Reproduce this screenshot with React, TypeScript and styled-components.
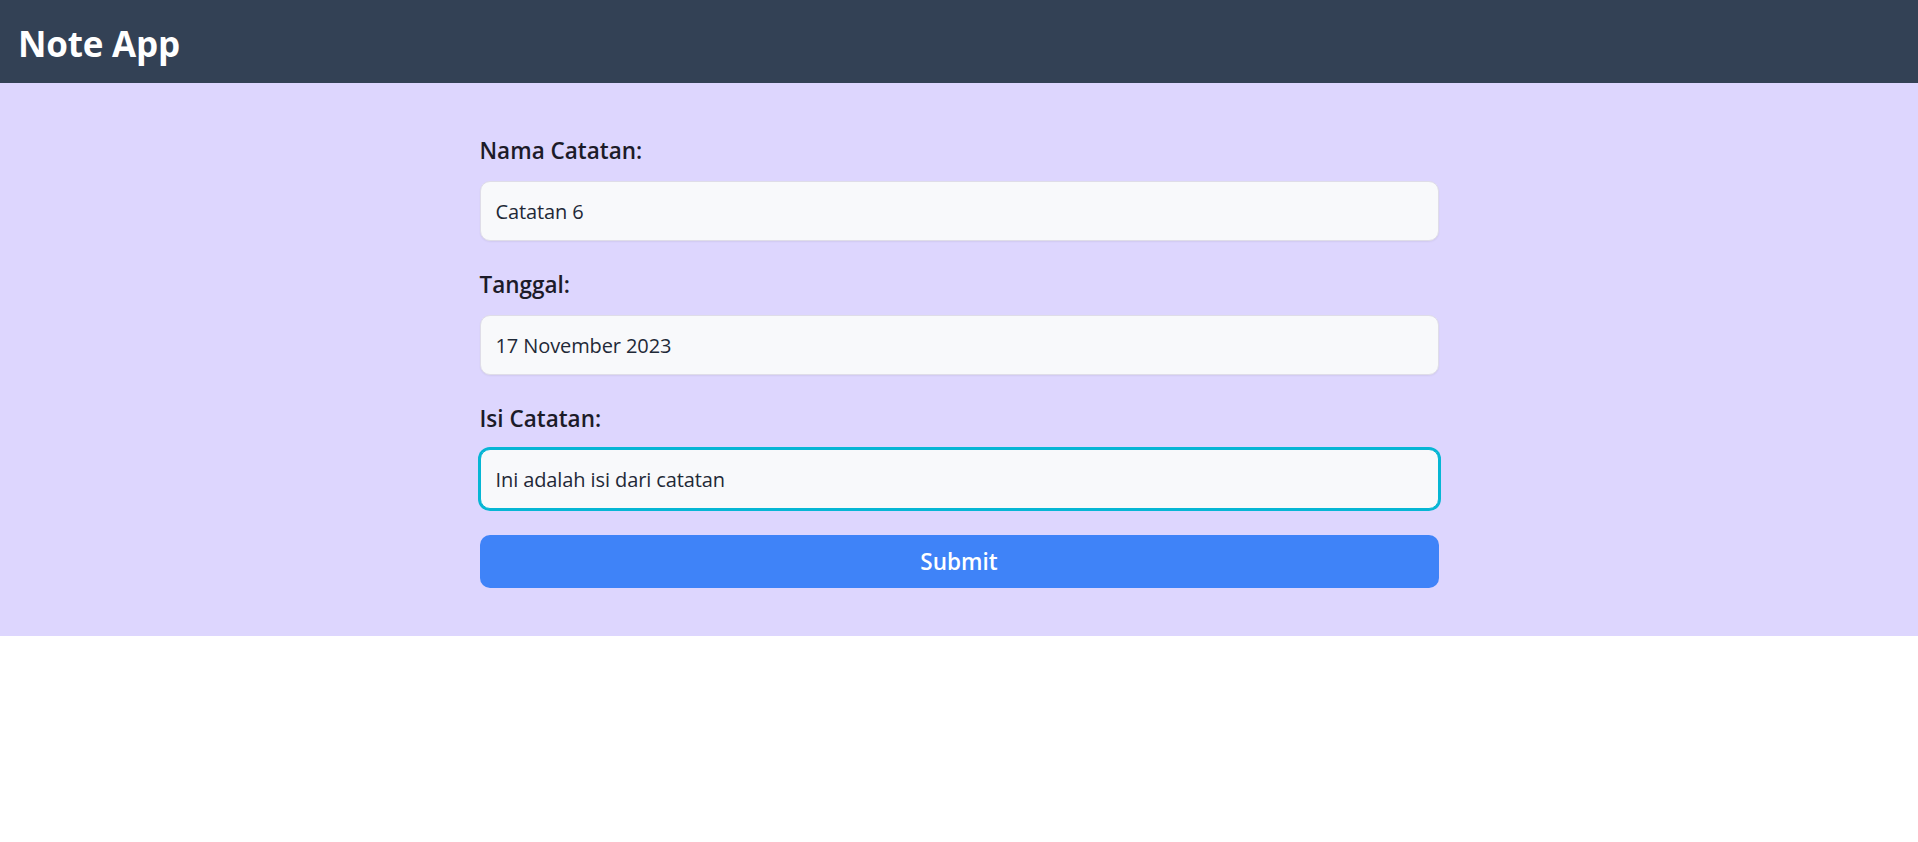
import React, { useEffect, useRef, useState } from "react";
import styled, { createGlobalStyle } from "styled-components";

const GlobalStyle = createGlobalStyle`
  html, body {
    margin: 0;
    padding: 0;
    background: #ffffff;
  }
  body {
    font-family: "Open Sans", "Noto Sans", "Liberation Sans", sans-serif;
    color: #1f2937;
  }
  * { box-sizing: border-box; }
`;

const Header = styled.header`
  height: 83px;
  background: #334155;
  display: flex;
  align-items: center;
  padding: 4px 18px 0;
`;

const Title = styled.h1`
  margin: 0;
  font-size: 35px;
  font-weight: 700;
  color: #ffffff;
  letter-spacing: -0.2px;
`;

const Main = styled.main`
  background: #ddd6fe;
  padding: 50px 0 48px;
`;

const Form = styled.form`
  width: 50%;
  margin: 0 auto;
  display: flex;
  flex-direction: column;
  gap: 26px;
`;

const Field = styled.div`
  display: flex;
  flex-direction: column;
`;

const Label = styled.label`
  display: block;
  font-size: 22.5px;
  line-height: 35px;
  font-weight: 600;
  color: #1c1b29;
  margin-bottom: 13px;
`;

const Input = styled.input<{ $active?: boolean }>`
  height: 60px;
  width: 100%;
  padding: 0 15px;
  font-family: "Open Sans", "Noto Sans", sans-serif;
  font-size: 20px;
  letter-spacing: -0.1px;
  color: #1f2937;
  background: #f8f9fb;
  border-radius: 10px;
  border: 1px solid ${(p) => (p.$active ? "#06b6d4" : "#dfdde8")};
  box-shadow: ${(p) =>
    p.$active ? "0 0 0 2px #06b6d4" : "0 1px 2px rgba(0, 0, 0, 0.06)"};
  outline: none;
  caret-color: #111827;
`;

const SubmitButton = styled.button`
  height: 53px;
  width: 100%;
  border: none;
  border-radius: 10px;
  background: #3f83f8;
  color: #ffffff;
  font-family: "Open Sans", "Noto Sans", sans-serif;
  font-size: 22.5px;
  font-weight: 600;
  cursor: pointer;
`;

export default function App() {
  const [name, setName] = useState("Catatan 6");
  const [date, setDate] = useState("17 November 2023");
  const [body, setBody] = useState("Ini adalah isi dari catatan");
  const bodyRef = useRef<HTMLInputElement>(null);

  useEffect(() => {
    const el = bodyRef.current;
    if (el) {
      el.focus();
      const end = el.value.length;
      el.setSelectionRange(end, end);
    }
  }, []);

  return (
    <>
      <GlobalStyle />
      <Header>
        <Title>Note App</Title>
      </Header>
      <Main>
        <Form onSubmit={(e) => e.preventDefault()}>
          <Field>
            <Label htmlFor="nama">Nama Catatan:</Label>
            <Input id="nama" value={name} onChange={(e) => setName(e.target.value)} />
          </Field>
          <Field>
            <Label htmlFor="tanggal">Tanggal:</Label>
            <Input id="tanggal" value={date} onChange={(e) => setDate(e.target.value)} />
          </Field>
          <Field>
            <Label htmlFor="isi">Isi Catatan:</Label>
            <Input
              id="isi"
              ref={bodyRef}
              $active
              value={body}
              onChange={(e) => setBody(e.target.value)}
            />
          </Field>
          <SubmitButton type="submit">Submit</SubmitButton>
        </Form>
      </Main>
    </>
  );
}
